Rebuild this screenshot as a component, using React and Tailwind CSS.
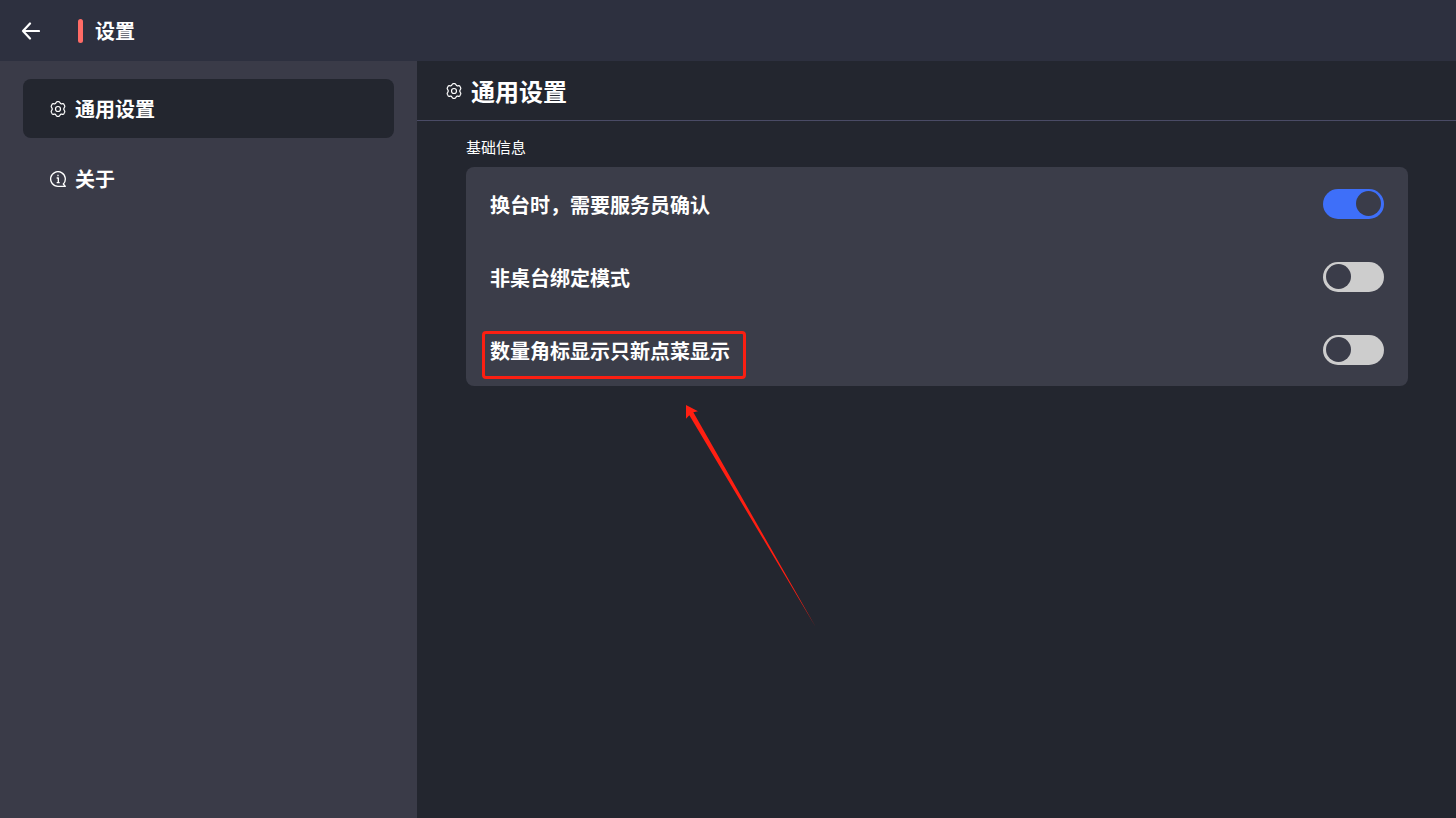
import React, { useState } from 'react';

const GearIcon = () => (
  <svg width="16" height="16" viewBox="0 0 48 48" fill="none" stroke="currentColor" strokeWidth="3.6" strokeLinejoin="round" className="shrink-0" aria-hidden="true">
    <path d="M18 5.5 Q19 2 22 2 H26 Q29 2 30 5.5 Q31.5 9.5 35.5 8.5 Q40 7 41.5 9.5 L44 14 Q45.5 17 43 19.5 Q39 24 43 28.5 Q45.5 31 44 34 L41.5 38.5 Q40 41 35.5 39.5 Q31.5 38.5 30 42.5 Q29 46 26 46 H22 Q19 46 18 42.5 Q16.5 38.5 12.5 39.5 Q8 41 6.5 38.5 L4 34 Q2.5 31 5 28.5 Q9 24 5 19.5 Q2.5 17 4 14 L6.5 9.5 Q8 7 12.5 8.5 Q16.5 9.5 18 5.5 Z" />
    <circle cx="24" cy="24" r="7.5" />
  </svg>
);

const AboutIcon = () => (
  <svg width="16" height="16" viewBox="0 0 48 48" fill="none" stroke="currentColor" strokeWidth="4" strokeLinejoin="round" className="shrink-0" aria-hidden="true">
    <path d="M24 46 A22 22 0 1 1 40 39 L46 46 Z" />
    <path d="M24 11 V16 M20 21 H25 V34 M20 35 H29" />
  </svg>
);

const BackIcon = () => (
  <svg width="20" height="20" viewBox="0 0 20 20" fill="none" stroke="currentColor" strokeWidth="2.2" strokeLinecap="round" strokeLinejoin="round" aria-hidden="true">
    <path d="M19 10 H3 M10 2.5 L3 10 L10 17.5" />
  </svg>
);

const menuItems = [
  { id: 'general', label: '通用设置', icon: GearIcon },
  { id: 'about', label: '关于', icon: AboutIcon },
];

const initialSettings = [
  { id: 'confirm', label: '换台时，需要服务员确认', on: true },
  { id: 'unbound', label: '非桌台绑定模式', on: false },
  { id: 'badge', label: '数量角标显示只新点菜显示', on: false, marked: true },
];

// Red frame and arrow that point at a setting
const Callout = () => (
  <span className="pointer-events-none absolute -top-1 -left-2 -right-4 h-12 rounded-sm border-3 border-[#fb1f12]">
    <svg width="130" height="222" viewBox="0 0 390 666" className="absolute top-[71px] left-[201px]" aria-hidden="true">
      <path d="M0 0 L36 19 L22 22 L389 666 L10 31 L0 41 Z" fill="#ff1f12" />
    </svg>
  </span>
);

const SettingRow = ({ setting, onToggle }) => (
  <div className="flex h-[73px] items-center justify-between">
    <label htmlFor={setting.id} className="relative pt-0.5 text-xl font-bold">
      {setting.label}
      {setting.marked && <Callout />}
    </label>
    <input
      id={setting.id}
      type="checkbox"
      role="switch"
      checked={setting.on}
      onChange={() => onToggle(setting.id)}
      className="flex h-[30px] w-[61px] shrink-0 cursor-pointer appearance-none items-center rounded-full bg-[#cdcdcd] px-[3px] before:size-[25px] before:rounded-full before:bg-[#3a3c49] checked:justify-end checked:bg-[#3e6ff9]"
    />
  </div>
);

const App = () => {
  const [active, setActive] = useState('general');
  const [settings, setSettings] = useState(initialSettings);

  const toggle = (id) => {
    setSettings(settings.map((s) => (s.id === id ? { ...s, on: !s.on } : s)));
  };

  return (
    <div className="flex min-h-screen flex-col bg-[#23262f] font-['Noto_Sans_CJK_SC',sans-serif] text-white">
      <header className="flex h-[61px] items-center bg-[#2d303f] px-5">
        <button type="button" aria-label="返回" className="cursor-pointer">
          <BackIcon />
        </button>
        <span className="ml-[38px] h-6 w-[5px] rounded-full bg-[#ff6b66]" />
        <h1 className="ml-3 text-xl font-bold">设置</h1>
      </header>

      <div className="flex flex-1">
        <nav className="flex w-[417px] shrink-0 flex-col gap-[11px] bg-[#3a3b48] px-[23px] py-[18px]">
          {menuItems.map(({ id, label, icon: Icon }) => (
            <button
              key={id}
              type="button"
              onClick={() => setActive(id)}
              className={`flex h-[59px] cursor-pointer items-center gap-[9px] rounded-lg px-[27px] text-xl font-bold ${active === id ? 'bg-[#23262f]' : ''}`}
            >
              <Icon />
              {label}
            </button>
          ))}
        </nav>

        <main className="min-w-0 flex-1">
          <div className="flex h-[60px] items-center gap-[9px] border-b border-[#4a4b66] px-[29px]">
            <GearIcon />
            <h2 className="text-2xl font-bold">通用设置</h2>
          </div>
          <section className="pt-4 pr-12 pl-[49px]">
            <h3 className="text-[15px] leading-5">基础信息</h3>
            <div className="mt-2.5 rounded-lg bg-[#3b3d49] px-6">
              {settings.map((setting) => (
                <SettingRow key={setting.id} setting={setting} onToggle={toggle} />
              ))}
            </div>
          </section>
        </main>
      </div>
    </div>
  );
};

export default App;
